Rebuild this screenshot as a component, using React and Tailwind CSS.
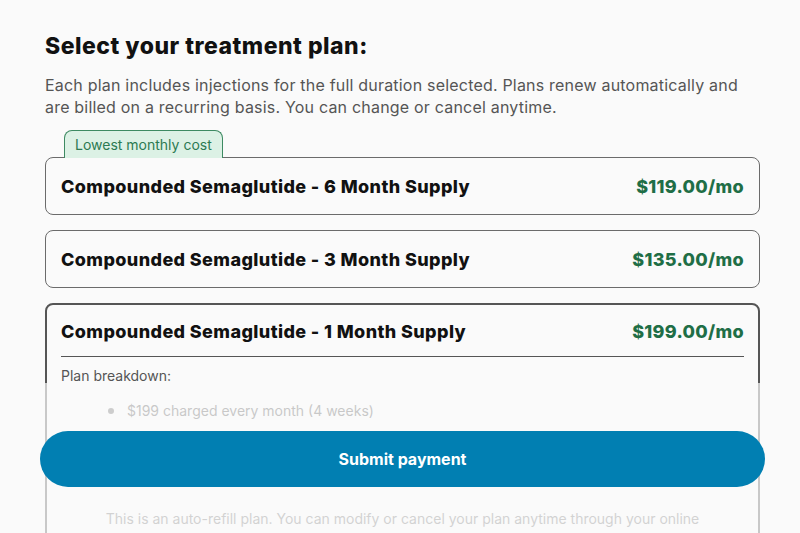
const plans = [
  { id: 6, title: "Compounded Semaglutide - 6 Month Supply", price: "$119.00/mo", tag: "Lowest monthly cost" },
  { id: 3, title: "Compounded Semaglutide - 3 Month Supply", price: "$135.00/mo" },
];

function PlanCard({ plan }) {
  return (
    <div className="flex flex-col">
      {plan.tag && (
        <div className="ml-[19px] -mb-px flex">
          <span className="relative z-10 rounded-t-lg border border-b-0 border-[#3d8a62] bg-[#dcf1e5] px-[10px] pt-[5px] pb-[5px] text-[14px] leading-[17px] text-[#2c7a52]">
            {plan.tag}
          </span>
        </div>
      )}
      <div className="flex h-[58px] items-center justify-between rounded-lg border border-[#6b6b6b] bg-[#fafafa] px-[15px]">
        <span className="text-[18px] font-extrabold tracking-[0.4px] text-[#111]">{plan.title}</span>
        <span className="text-[18px] font-extrabold tracking-[0.3px] text-[#1f6e46]">{plan.price}</span>
      </div>
    </div>
  );
}

export default function App() {
  return (
    <div className="relative min-h-[533px] overflow-hidden bg-[#fafafa] font-['Inter',sans-serif]">
      <div className="ml-[45px] w-[715px] pt-[32px]">
        <h1 className="text-[23px] leading-[28px] font-extrabold tracking-[0.5px] text-[#111]">
          Select your treatment plan:
        </h1>
        <p className="mt-[14px] text-[16px] leading-[22px] tracking-[0.2px] text-[#555]">
          Each plan includes injections for the full duration selected. Plans renew automatically and
          are billed on a recurring basis. You can change or cancel anytime.
        </p>

        <div className="mt-[12px] flex flex-col gap-[15px]">
          {plans.map((p) => (
            <PlanCard key={p.id} plan={p} />
          ))}

          <div className="rounded-lg border-2 border-[#555] bg-[#fafafa] px-[14px] pb-[20px]">
            <div className="flex h-[52px] items-end justify-between border-b border-[#555] pb-[11px]">
              <span className="text-[18px] font-extrabold tracking-[0.4px] text-[#111]">
                Compounded Semaglutide - 1 Month Supply
              </span>
              <span className="text-[18px] font-extrabold tracking-[0.3px] text-[#1f6e46]">$199.00/mo</span>
            </div>
            <div className="mt-[10px] text-[14px] leading-[18px] text-[#555]">Plan breakdown:</div>
            <div className="mt-[17px] flex items-center gap-[13px] pl-[47px] text-[14px] leading-[18px] text-[#555]">
              <span className="h-[6px] w-[6px] rounded-full bg-[#666]" />
              <span>$199 charged every month (4 weeks)</span>
            </div>
            <p className="mx-auto mt-[88px] w-[620px] text-center text-[14px] leading-[22px] text-[#777]">
              This is an auto-refill plan. You can modify or cancel your plan anytime through your online
              account portal.
            </p>
          </div>
        </div>
      </div>

      <div className="fixed inset-x-0 top-[383px] bottom-0 bg-[#fafafa]/70">
        <button className="mt-[48px] ml-[40px] flex h-[56px] w-[725px] items-center justify-center rounded-full bg-[#017fb2] text-[16px] font-bold text-white">
          Submit payment
        </button>
      </div>
    </div>
  );
}
